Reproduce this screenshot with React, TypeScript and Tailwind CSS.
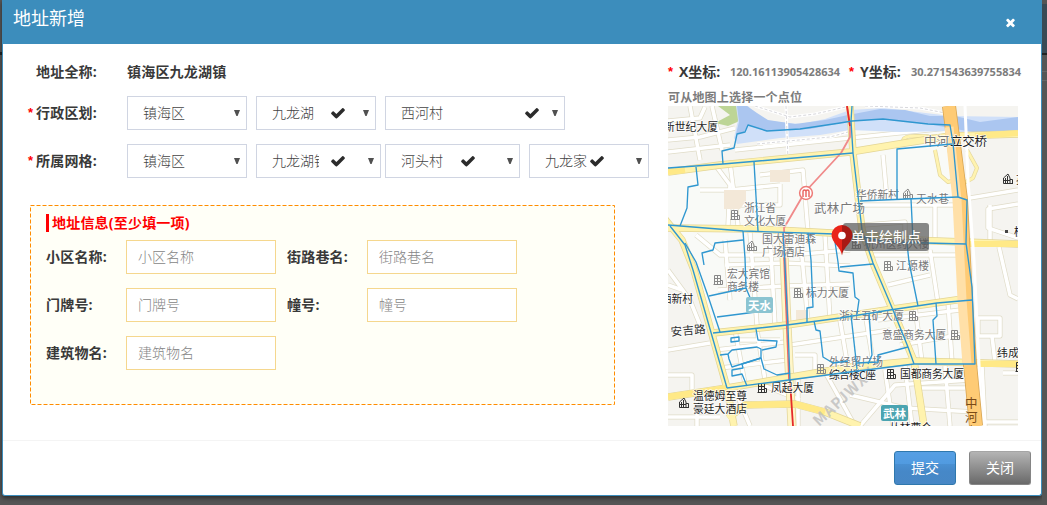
import React from "react";

const CJK = "font-['Open_Sans','Noto_Sans_CJK_SC',sans-serif]";

function CheckIcon({ className }: { className: string }) {
  return (
    <svg viewBox="0 0 1792 1792" className={`absolute top-[8px] h-4 w-4 fill-[#2b2b2b] ${className}`}>
      <path d="M1671 566q0 40-28 68l-724 724-136 136q-28 28-68 28t-68-28l-136-136-362-362q-28-28-28-68t28-68l136-136q28-28 68-28t68 28l294 295 656-657q28-28 68-28t68 28l136 136q28 28 28 68z" />
    </svg>
  );
}

function CloseIcon() {
  return (
    <svg viewBox="0 0 1792 1792" className="h-[13px] w-[13px] fill-white">
      <path d="M1490 1322q0 40-28 68l-136 136q-28 28-68 28t-68-28l-294-294-294 294q-28 28-68 28t-68-28l-136-136q-28-28-28-68t28-68l294-294-294-294q-28-28-28-68t28-68l136-136q28-28 68-28t68 28l294 294 294-294q28-28 68-28t68 28l136 136q28 28 28 68t-28 68l-294 294 294 294q28 28 28 68z" />
    </svg>
  );
}

interface SelectBoxProps {
  text: string;
  width: string;
  textWidth?: string;
  check?: string;
}

function SelectBox({ text, width, textWidth = "w-auto", check }: SelectBoxProps) {
  return (
    <div className={`relative flex h-[34px] shrink-0 items-center justify-between border border-[#d0d5e2] bg-white pl-[15px] pr-[6px] ${width}`}>
      <span className={`overflow-hidden whitespace-nowrap text-sm font-light text-[#444] ${textWidth}`}>{text}</span>
      {check && <CheckIcon className={check} />}
      <svg viewBox="0 0 6 6" className="h-[6px] w-[6px] fill-[#505050]">
        <path d="M0 0H6L3.6 6H2.4Z" />
      </svg>
    </div>
  );
}

function RowLabel({ text, required }: { text: string; required?: boolean }) {
  return (
    <div className="mr-[30px] flex w-[94px] shrink-0 items-center justify-end text-sm font-bold text-[#393939]">
      {required && <span className="mr-[3px] font-['Liberation_Sans',sans-serif] text-[13px] font-bold text-[#f00]">*</span>}
      <span className="whitespace-nowrap tracking-[0.2px]">{text}</span>
    </div>
  );
}

function Field({ label, width }: { label: string; width: string }) {
  return (
    <div className="flex items-center">
      <label className={`shrink-0 whitespace-nowrap text-sm font-bold tracking-[0.2px] text-[#393939] ${width}`}>{label}:</label>
      <input
        placeholder={label}
        className="h-[34px] w-[150px] border border-[#f5d78e] bg-white px-[11px] pb-px text-sm font-light placeholder:text-[#858585]"
      />
    </div>
  );
}

const whiteRoads = [
  "M668 140L700 137L735 128", "M690 106L700 160", "M668 121L700 118L705 107", "M712 106L722 150", "M668 152L730 145",
  "M735 150L850 138L948 128",
  "M730 163L738 225", "M700 190H730L780 185", "M716 166L730 185L728 226", "M760 175L803 170L808 232",
  "M780 184V205H740", "M696 235L720 255H790L850 250", "M725 240L730 300", "M750 232L757 325", "M770 235L775 326",
  "M800 235L808 322", "M825 235L830 320", "M725 265L785 263L850 266", "M718 290L785 286L850 284", "M735 330L745 384",
  "M757 330L765 380", "M715 350L785 342", "M720 368L788 360", "M740 340H780", "M840 320L848 368", "M790 345L890 330",
  "M865 312L873 362", "M795 355H815V375", "M878 320L960 310", "M900 345L965 334", "M915 306L922 362", "M948 302L952 362",
  "M862 205H958", "M883 155L887 200", "M935 205V240", "M873 255L965 255",
  "M888 285L930 275", "M930 250L938 303",
  "M864 225L905 222V245", "M958 200L1018 190", "M990 205V240", "M1018 204L988 209V228L1018 238",
  "M999 247L1010 295L1018 299", "M978 318H1000V336H978Z", "M992 336L995 362", "M1018 373H1003",
  "M982 366L985 426", "M985 422H1018", "M668 270L690 300L700 325", "M668 350L710 343", "M668 375H692V390", "M697 400V426",
  "M668 285L682 290", "M735 390L750 426", "M760 384L800 400", "M798 378V426", "M825 372L855 426", "M850 395L905 408L975 412",
  "M885 370L893 426", "M905 366L912 426", "M945 366L950 426", "M915 388H965", "M945 380H970", "M860 426L895 385L970 380",
  "M668 417H720",
];

const yellowRoads = [
  "M668 172L720 165L850 152L905 143L950 136L1018 134",
  "M668 228L758 229L850 234L910 240L1018 244",
  "M664 218L682 240L694 270L727 388L734 426",
  "M713 333L787 325L893 309L970 298",
  "M668 397L727 388L850 367L914 361L1018 364",
  "M850 106L853 153L862 230L873 263L914 361L924 426",
  "M728 418L745 405L795 404L825 412L860 426",
];

const districtLines = [
  "M723 164L722 151L734 148L737 134L745 132L748 125L767 131L800 129L840 123L852 121L883 119L928 124L950 125L953 143L958 197L967 200L966 243L972 287L975 364L914 364L850 372L727 388",
  "M668 168L723 164L853 153",
  "M696 167L698 185L688 187L687 208L680 226",
  "M668 225L743 231L835 234L868 238L885 242L966 244",
  "M754 162L758 231",
  "M670 226L685 245L693 270L727 388",
  "M685 243L696 262L708 296L720 332",
  "M704 265L702 253L713 250L715 243L743 240",
  "M743 231L745 258L746 288L756 312L717 317",
  "M746 288L709 296",
  "M783 232L785 265L788 327L790 382",
  "M808 233L811 260L813 307L807 308L807 323",
  "M834 235L838 262L839 271L853 273L855 297L859 300L857 314",
  "M713 333L787 325L840 318L890 310L937 303L972 300",
  "M852 106L851 121L853 153L862 230L873 263L893 310L908 347L914 364",
  "M897 199V149L952 144",
  "M860 201L907 199L958 197",
  "M911 199L913 240L907 243L909 262L918 306",
  "M840 267L873 264",
  "M720 355L728 354L732 350L757 347L761 349V358L732 367L729 359L728 354",
  "M761 358L764 369L777 375L790 373",
  "M761 358L742 364L743 368L732 370V376L742 374L747 386",
  "M731 338L739 337V341L731 342Z",
  "M756 329L758 340L777 341L776 347L762 350",
  "M814 321L816 330L820 331L823 357L833 363L848 361",
  "M851 315L857 369",
  "M869 313L872 355L868 364",
  "M908 347L878 355V362L857 363",
  "M936 303L937 316L933 320L936 364",
];

interface MapLabel {
  t: string;
  x: number;
  y: number;
  w: number;
  dark?: boolean;
  size?: number;
}

const mapLabels: MapLabel[] = [
  { t: "新世纪大厦", x: 664, y: 127, w: 54, dark: true },
  { t: "浙江省", x: 744, y: 208, w: 32 },
  { t: "文化大厦", x: 744, y: 221, w: 42 },
  { t: "武林广场", x: 814, y: 209, w: 51, size: 12.5 },
  { t: "国大雷迪森", x: 762, y: 239, w: 54 },
  { t: "广场酒店", x: 762, y: 252, w: 43 },
  { t: "华侨新村", x: 856, y: 195, w: 43 },
  { t: "天水巷", x: 916, y: 199, w: 33 },
  { t: "中河", x: 924, y: 142, w: 25, size: 12.5 },
  { t: "立交桥", x: 950, y: 142, w: 37, size: 12.5, dark: true },
  { t: "杭州医药大楼", x: 864, y: 244, w: 65 },
  { t: "江源楼", x: 896, y: 266, w: 33 },
  { t: "宏大宾馆", x: 727, y: 274, w: 43 },
  { t: "商务楼", x: 727, y: 286.5, w: 32 },
  { t: "标力大厦", x: 806, y: 293, w: 43 },
  { t: "西新村", x: 661, y: 299, w: 32, dark: true },
  { t: "浙江五矿大厦", x: 839, y: 316, w: 65 },
  { t: "意盛商务大厦", x: 882, y: 335, w: 64 },
  { t: "外经贸广场", x: 829, y: 362, w: 54 },
  { t: "综合楼C座", x: 829, y: 375, w: 47, dark: true },
  { t: "国都商务大厦", x: 900, y: 374, w: 64, dark: true },
  { t: "凤起大厦", x: 771, y: 388, w: 43, dark: true },
  { t: "温德姆至尊", x: 693, y: 396, w: 54, dark: true },
  { t: "豪廷大酒店", x: 693, y: 409, w: 54, dark: true },
  { t: "纬成", x: 997, y: 353, w: 22, dark: true },
  { t: "丛林曹仓", x: 889, y: 428, w: 43, dark: true },
  { t: "孩", x: 1016, y: 180, w: 11, dark: true },
  { t: "棋", x: 1014, y: 232, w: 11, dark: true },
];

const buildings: [number, number, boolean?][] = [
  [735, 215], [856, 244], [888, 266], [718, 280], [798, 293], [913, 316], [955, 335],
  [821, 369], [891, 374, true], [762, 388, true], [1020, 367, true],
];

const towers: [number, number, boolean?][] = [
  [752, 246], [908, 194], [684, 403, true], [1008, 179, true],
];

function DistrictMap() {
  return (
    <svg
      viewBox="668 106 350 320"
      className="block h-[320px] w-[350px] font-['Noto_Sans_CJK_SC',sans-serif]"
    >
      <rect x="668" y="106" width="350" height="320" fill="#f5f4f0" />
      <path d="M668 168L853 153L850 121L950 125L967 200L975 364L914 364L727 388L685 245L668 225Z" fill="#f9faf7" />
      <g fill="none" strokeLinejoin="round">
        {whiteRoads.map((d) => <path key={d} d={d} stroke="#e0dcc8" strokeWidth="5" />)}
        {whiteRoads.map((d) => <path key={d} d={d} stroke="#ffffff" strokeWidth="3.6" />)}
      </g>
      <path d="M718 106H737V112L742 120L728 126L715 123L730 115Z" fill="#bdd596" />
      <path d="M736 106H748L757 116L768 121L800 124L825 119L850 110L885 108L950 116L1018 117V131L985 134L950 131L900 132L850 130L820 135L780 138L737 144L734 138L738 120Z" fill="#d0e0f9" />
      <path d="M737 106H747L757 113L768 120L795 124L825 120L848 115L880 109L905 110L930 116L955 116L980 122L1018 117V131L985 134L955 129L928 124L883 119L852 121L810 129L767 131L748 125L744 132L736 134L739 122Z" fill="#abc6f0" />
      <path d="M724 190H746V201L740 209H724Z M770 170H790V182H770Z M796 310H808V320H796Z" fill="#f3e8d8" />
      <g fill="none" strokeLinejoin="round">
        <path d="M786 106L788 160M755 106L790 117L815 114L850 106M757 144L830 137L848 132M865 106L920 108L945 113" stroke="#fff" strokeWidth="3" />
        <path d="M786 106L788 160M755 106L790 117L815 114L850 106M757 144L830 137L848 132M865 106L920 108L945 113" stroke="#d8d8dc" strokeWidth="1" strokeDasharray="3 2" />
        <path d="M903 142C902 134 915 136 945 137M935 150L940 175L948 182L955 180M967 150L977 168L973 178L964 183" stroke="#e4d79c" strokeWidth="4" />
        <path d="M903 142C902 134 915 136 945 137M935 150L940 175L948 182L955 180M967 150L977 168L973 178L964 183" stroke="#fff3b0" strokeWidth="2.6" />
        <path d="M783 232L787 325L792 426" stroke="#e4d79c" strokeWidth="9" />
        <path d="M783 232L787 325L792 426" stroke="#fff6c8" strokeWidth="7.4" />
        {yellowRoads.map((d) => <path key={d} d={d} stroke="#e3d595" strokeWidth="7.4" />)}
        {yellowRoads.map((d) => <path key={d} d={d} stroke="#fff3ae" strokeWidth="6" />)}
        <path d="M975 136L1018 133M968 244H1018M978 364H1018M668 397L727 388M735 412L745 405L795 404L825 412M668 172L685 170" stroke="#ffe987" strokeWidth="6.2" />
        <path d="M965 106L968 180L974 260L982 426" stroke="#fff" strokeWidth="3" />
        <path d="M949 106L961 200L966 300L970 364L976 426" stroke="#d9a653" strokeWidth="14" />
        <path d="M949 106L961 200L966 300L970 364L976 426" stroke="#fecb75" strokeWidth="12.4" />
        <path d="M949 127L957 200L962 300L967 364" stroke="#ffe0a8" strokeWidth="9" />
        <path d="M847 106L850 126V137L841 153L805 192L784 228L788 325" stroke="#f08a8a" strokeWidth="1.8" />
        <path d="M847 106L850 126M790 380L793 426" stroke="#e52b2b" strokeWidth="1.8" />
        <path d="M783 234L789 380" stroke="#e66" strokeWidth="1.6" />
      </g>
      <text x="819" y="427" transform="rotate(-43 819 427)" fontSize="15" fontWeight="bold" fill="#bdbdbd" fillOpacity=".8" textLength="78">MAPJWXX</text>
      <g fontSize="10.8" stroke="#fff" strokeWidth="1.5" strokeOpacity=".8" paintOrder="stroke">
        {mapLabels.map((l) => (
          <text key={l.t} x={l.x} y={l.y + 4} textLength={l.w} fontSize={l.size ?? 10.8} fill={l.dark ? "#1e1e1e" : "#777"}>
            {l.t}
          </text>
        ))}
        <text x="671" y="336" transform="rotate(-5 671 336)" fontSize="11.5" textLength="35" fill="#333">安吉路</text>
      </g>
      <g fill="none" strokeWidth="1">
        {buildings.map(([x, y, dark]) => (
          <path
            key={`${x}-${y}`}
            stroke={dark ? "#333" : "#888"}
            transform={`translate(${x} ${y})`}
            d="M-3.5 4.5V-4.5H2.5V4.5M-4.5 4.5H4.5M2.5 0.5H4.5V4.5M-.5 -4.5V4.5M-3.5 -1.5H2.5M-3.5 1.5H2.5"
          />
        ))}
        {towers.map(([x, y, dark]) => (
          <path
            key={`${x}-${y}`}
            stroke={dark ? "#333" : "#888"}
            transform={`translate(${x} ${y})`}
            d="M-4.5 4.5V-1L0 -5L2 -1V4.5M-4.5 4.5H5M2 .5H4.5V4.5M-2.5 -1V4.5M-.5 -3V4.5M-4 1.5H2"
          />
        ))}
      </g>
      <g fill="none" stroke="#2f97d0" strokeWidth="1.35" strokeLinejoin="round">
        {districtLines.map((d) => <path key={d} d={d} />)}
      </g>
      <circle cx="806" cy="193" r="6.4" fill="#fff" stroke="#ee7a76" strokeWidth="1.5" />
      <path d="M803 197V191.5Q803 190 804.5 190Q806 190 806 191.5V197M806 191.5Q806 190 807.5 190Q809 190 809 191.5V197" fill="none" stroke="#e8605c" strokeWidth="1.4" />
      <rect x="746" y="297" width="27" height="16" rx="2" fill="#8bc4d1" />
      <text x="748" y="309.5" fontSize="11.5" fontWeight="bold" fill="#fff">天水</text>
      <rect x="881" y="405" width="27" height="16" rx="2" fill="#4ba4b1" />
      <text x="883" y="417.5" fontSize="11.5" fontWeight="bold" fill="#fff">武林</text>
      <g fontSize="12.5" fill="#7a4a16">
        <text x="965" y="408">中</text>
        <text x="965" y="422">河</text>
        <text x="965" y="436">高</text>
      </g>
      <rect x="1005" y="230" width="3" height="3" fill="#444" />
    </svg>
  );
}

function MapPin() {
  return (
    <svg viewBox="0 0 22 32" className="absolute left-[163px] top-[118px] h-8 w-[22px]">
      <path d="M11 31.5C10 23 0.5 19 0.5 10.5A10.5 10.5 0 0 1 11 1Z" fill="#ea2419" />
      <path d="M11 31.5C12 23 21.5 19 21.5 10.5A10.5 10.5 0 0 0 11 1Z" fill="#a81a14" />
      <circle cx="11" cy="11.5" r="3.8" fill="#fff" />
    </svg>
  );
}

function Coordinate({ label, value, width }: { label: string; value: string; width: string }) {
  return (
    <div className={`flex shrink-0 items-center whitespace-nowrap ${width}`}>
      <span className="w-[11px] font-['Liberation_Sans',sans-serif] text-[13px] font-bold text-[#f00]">*</span>
      <span className="w-[51px] text-sm font-bold text-[#393939]">{label}</span>
      <span className="text-[11px] font-bold text-[#7c7c7c]">{value}</span>
    </div>
  );
}

export default function App() {
  return (
    <div className={`flex h-[505px] w-[1047px] overflow-hidden bg-[#555] ${CJK}`}>
      <div className="flex h-[505px] w-[2px] shrink-0 flex-col bg-[#555]">
        <div className="mt-[52px] h-[3px] bg-[#222]" />
      </div>
      <div className="flex h-[496px] w-[1040px] shrink-0 flex-col rounded-b-[3px] border border-t-0 border-[#3c8dbc] bg-white shadow-[0_2px_4px_rgba(0,0,0,0.5)]">
        <header className="flex h-11 shrink-0 items-center justify-between bg-[#3c8dbc] pl-[10px] pr-[24px]">
          <h4 className="pb-2 text-[18px] leading-7 text-white">地址新增</h4>
          <CloseIcon />
        </header>
        <main className="flex h-[397px] shrink-0 border-b border-[#f4f4f4]">
          <section className="w-[665px] shrink-0 pt-[11px]">
            <div className="flex h-[34px] items-center">
              <RowLabel text="地址全称:" />
              <span className="text-sm font-bold tracking-[0.2px] text-[#393939]">镇海区九龙湖镇</span>
            </div>
            <div className="mt-[7px] flex h-[34px] items-center">
              <RowLabel text="行政区划:" required />
              <div className="flex gap-[9px]">
                <SelectBox text="镇海区" width="w-[120px]" />
                <SelectBox text="九龙湖" width="w-[120px]" check="left-[73px]" />
                <SelectBox text="西河村" width="w-[180px]" check="left-[138px]" />
              </div>
            </div>
            <div className="mt-[14px] flex h-[34px] items-center">
              <RowLabel text="所属网格:" required />
              <div className="flex">
                <SelectBox text="镇海区" width="mr-[9px] w-[120px]" />
                <SelectBox text="九龙湖镇" width="mr-1 w-[125px]" textWidth="w-[47px]" check="left-[73px]" />
                <SelectBox text="河头村" width="mr-[9px] w-[135px]" check="left-[74px]" />
                <SelectBox text="九龙家" width="w-[120px]" check="left-[59px]" />
              </div>
            </div>
            <div className="relative ml-[27px] mt-[27px] h-[200px] w-[585px] bg-[#fffff7] pl-4 pt-[9px]">
              <svg className="absolute inset-0 h-[200px] w-[585px]" viewBox="0 0 585 200">
                <rect x=".5" y=".5" width="584" height="199" fill="none" stroke="#ff8c00" strokeDasharray="4 2" />
              </svg>
              <div className="flex h-[18px] items-center border-l-[3px] border-[#f00] pl-[3px] text-sm font-bold tracking-[0.2px] text-[#f00]">
                地址信息(至少填一项)
              </div>
              <div className="mt-2 grid grid-cols-[241px_230px] gap-y-[14px]">
                <Field label="小区名称" width="w-20" />
                <Field label="街路巷名" width="w-20" />
                <Field label="门牌号" width="w-20" />
                <Field label="幢号" width="w-20" />
                <Field label="建筑物名" width="w-20" />
              </div>
            </div>
          </section>
          <section className="w-[373px] shrink-0 pt-[18px]">
            <div className="flex h-5 items-center">
              <Coordinate label="X坐标:" value="120.16113905428634" width="w-[181px]" />
              <Coordinate label="Y坐标:" value="30.271543639755834" width="w-[180px]" />
            </div>
            <p className="mt-2 h-4 text-xs font-bold leading-4 tracking-[0.2px] text-[#7c7c7c]">可从地图上选择一个点位</p>
            <div className="relative h-[320px] w-[350px] overflow-hidden">
              <DistrictMap />
              <div className="absolute left-[175px] top-[117px] flex h-7 w-[86px] items-center rounded-[3px] bg-[#555]/70 pl-2 text-sm text-white">
                单击绘制点
              </div>
              <MapPin />
            </div>
          </section>
        </main>
        <footer className="flex gap-[13px] pl-[891px] pt-[10px]">
          <button className="h-[34px] w-[62px] rounded-[3px] border border-[#2f78ad] bg-[linear-gradient(#569fe4_0%,#519be0_36%,#4a90d2_38%,#4688c8_60%,#4787c5_100%)] text-sm text-white">
            提交
          </button>
          <button className="h-[34px] w-[62px] rounded-[3px] border border-[#858585] border-t-[#a5a5a5] bg-[linear-gradient(#b4b4b4,#696969)] text-sm text-white">
            关闭
          </button>
        </footer>
      </div>
      <div className="flex w-[5px] shrink-0 flex-col bg-[#555]">
        <div className="mt-1 h-[49px] bg-[#3a4a55]" />
        <div className="h-[2px] bg-[#222]" />
        <div className="mt-4 h-px bg-[#666]" />
        <div className="mt-2 h-px bg-[#666]" />
      </div>
    </div>
  );
}
